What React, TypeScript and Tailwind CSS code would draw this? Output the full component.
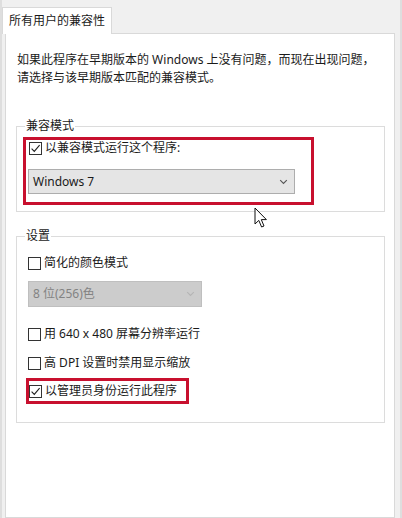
import React from "react";

const font = "font-['Noto_Sans','Noto_Sans_CJK_SC',sans-serif]";

const Check = ({ checked }: { checked?: boolean }) => {
  return (
    <span className="flex h-[13px] w-[13px] shrink-0 items-center justify-center border border-[#333333] bg-white">
      {checked && (
        <svg width="11" height="11" viewBox="0 0 11 11">
          <path d="M1.6 5.6 L4.3 8.4 L9.6 2.2" fill="none" stroke="#1f1f1f" strokeWidth="1.1" />
        </svg>
      )}
    </span>
  );
};

const Chevron = ({ color }: { color: string }) => (
  <svg width="9" height="6" viewBox="0 0 9 6">
    <path d="M1.2 1.2 L4.5 4.5 L7.8 1.2" fill="none" stroke={color} strokeWidth="1.1" />
  </svg>
);

const CheckRow = ({ label, checked }: { label: string; checked?: boolean }) => (
  <div className="flex h-[18px] items-center gap-[3px] text-[12px] text-[#1a1a1a]">
    <Check checked={checked} />
    <span>{label}</span>
  </div>
);

const Cursor = () => (
  <svg width="14" height="22" viewBox="0 0 14 22" className="absolute left-[252px] top-[207px]">
    <path
      d="M1 1 L1 17 L4.8 13.4 L7.6 20 L10 19 L7.3 12.6 L12.4 12.6 Z"
      fill="white"
      stroke="#111"
      strokeWidth="1"
      strokeLinejoin="round"
    />
  </svg>
);

export default function App() {
  return (
    <div className={`relative flex h-[518px] w-[402px] flex-col overflow-hidden border-l-2 border-r-2 border-[#dedede] bg-[#f0f0f0] ${font}`}>
      {/* tab strip */}
      <div className="flex pt-[7px]">
        <div className="relative z-10 -mb-px flex h-[27px] items-center border border-b-0 border-[#d9d9d9] bg-white px-[6px] text-[12px] text-[#1a1a1a]">
          所有用户的兼容性
        </div>
      </div>

      {/* page */}
      <div className="ml-[3px] flex w-[390px] flex-1 flex-col border border-[#d9d9d9] bg-white">
        <p className="ml-[11px] mt-[17px] text-[12px] leading-[18px] text-[#1a1a1a]">
          如果此程序在早期版本的 Windows 上没有问题，而现在出现问题，
          <br />
          请选择与该早期版本匹配的兼容模式。
        </p>

        <fieldset className="ml-[10px] mt-[30px] w-[369px] border border-[#dcdcdc] pb-[6px] pl-[6px]">
          <legend className="ml-[2px] px-[1px] text-[12px] leading-[18px] text-[#1a1a1a]">兼容模式</legend>
          <div className="mt-[2px] w-[291px] border-[3px] border-[#c8102e] pb-[8px]">
            <div className="flex h-[16px] items-center gap-[3px] pl-[3px] text-[12px] text-[#1a1a1a]">
              <Check checked />
              <span>以兼容模式运行这个程序:</span>
            </div>
            <div className="ml-[2px] mt-[13px] flex h-[25px] w-[267px] items-center justify-between border border-[#adadad] bg-[#e5e5e5] pl-[4px] pr-[6px] text-[12px] text-[#1a1a1a]">
              <span>Windows 7</span>
              <Chevron color="#555" />
            </div>
          </div>
        </fieldset>

        <fieldset className="ml-[10px] mt-[15px] w-[369px] border border-[#dcdcdc] pb-[18px] pl-[11px]">
          <legend className="-ml-[3px] px-[1px] text-[12px] leading-[18px] text-[#1a1a1a]">设置</legend>
          <div className="mt-[9px]">
            <CheckRow label="简化的颜色模式" />
          </div>
          <div className="mt-[9px] flex h-[26px] w-[174px] items-center justify-between border border-[#bfbfbf] bg-[#cccccc] pl-[4px] pr-[6px] text-[12px] text-[#838383]">
            <span>8 位(256)色</span>
            <Chevron color="#b5b5b5" />
          </div>
          <div className="mt-[18px]">
            <CheckRow label="用 640 x 480 屏幕分辨率运行" />
          </div>
          <div className="mt-[11px]">
            <CheckRow label="高 DPI 设置时禁用显示缩放" />
          </div>
          <div className="-ml-[2px] mt-[6px] flex h-[26px] w-[163px] items-center border-[3px] border-[#c8102e]">
            <CheckRow label="以管理员身份运行此程序" checked />
          </div>
        </fieldset>
      </div>

      <Cursor />
    </div>
  );
}
